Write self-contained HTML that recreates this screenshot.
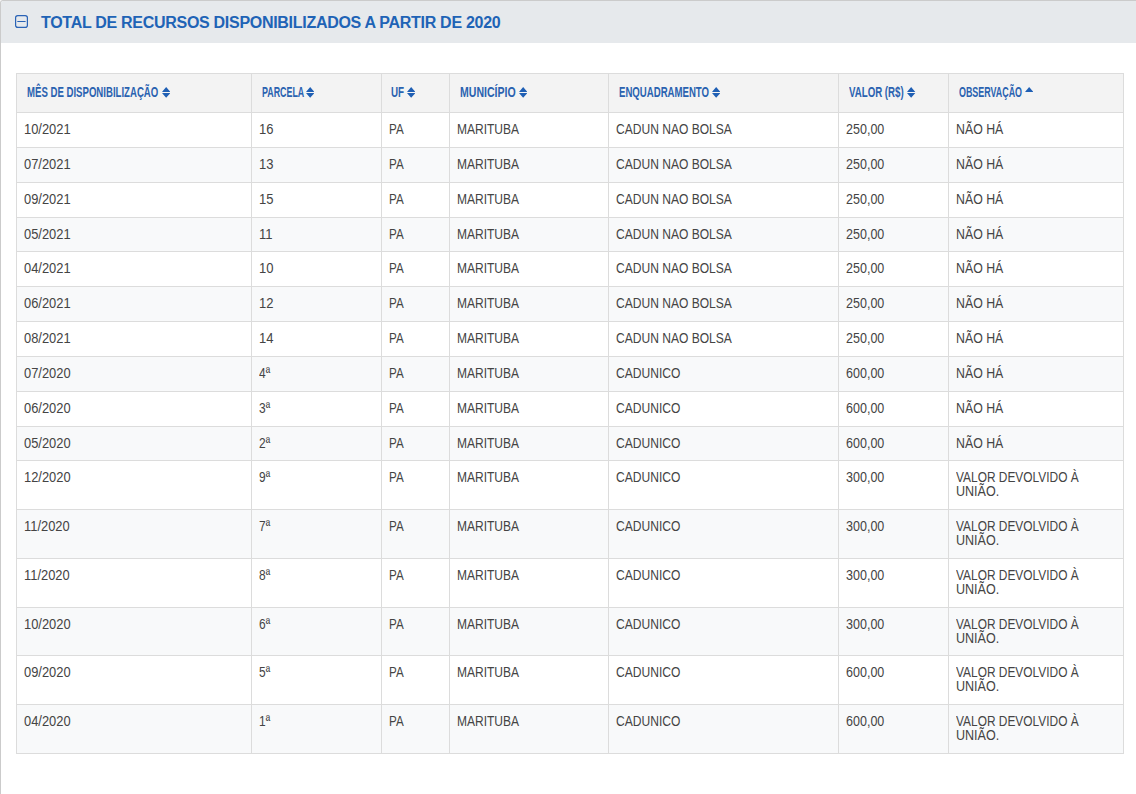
<!DOCTYPE html>
<html><head><meta charset="utf-8"><style>
html,body{margin:0;padding:0}
body{width:1136px;height:794px;overflow:hidden;background:#fff;position:relative;font-family:"Liberation Sans",sans-serif}
.box{position:absolute;left:0;top:0;width:1300px;height:900px;border-top:1px solid #cbcbcb;border-left:1px solid #cbcbcb;border-top-left-radius:3px;box-sizing:border-box}
.hd{position:absolute;left:1px;top:1px;width:1200px;height:42px;background:#e6e9ec;border-top-left-radius:2px}
.ttl{position:absolute;left:41px;top:13px;font-weight:bold;font-size:16px;line-height:20px;letter-spacing:-0.29px;color:#2063b6;white-space:nowrap}
.ic{position:absolute;left:15px;top:15px}
.hl{position:absolute;left:16px;width:1108px;height:1px;background:#dcdcdc}
.vl{position:absolute;top:73px;width:1px;height:681px;background:#dcdcdc}
.bg{position:absolute;left:17px;width:1106px}
.c{position:absolute;font-size:14px;line-height:14px;color:#444;white-space:nowrap;transform-origin:0 0}
.th{position:absolute;top:85px;font-weight:bold;font-size:14px;line-height:14px;color:#2a62b0;white-space:nowrap;transform-origin:0 0}
.si{position:absolute;top:87px}
</style></head><body>
<div class="box"></div>
<div class="hd"></div>
<svg class="ic" width="13" height="13" viewBox="0 0 13 13"><rect x="0.6" y="0.6" width="11.8" height="11.8" rx="2.2" fill="none" stroke="#2a63b6" stroke-width="1.2"/><rect x="2.3" y="6" width="8.3" height="1" fill="#2a63b6"/></svg>
<div class="ttl">TOTAL DE RECURSOS DISPONIBILIZADOS A PARTIR DE 2020</div>

<div class="bg" style="top:74px;height:38px;background:#f3f3f3"></div>
<div class="bg" style="top:148px;height:34px;background:#f8f9fa"></div>
<div class="bg" style="top:218px;height:33px;background:#f8f9fa"></div>
<div class="bg" style="top:287px;height:34px;background:#f8f9fa"></div>
<div class="bg" style="top:357px;height:34px;background:#f8f9fa"></div>
<div class="bg" style="top:427px;height:33px;background:#f8f9fa"></div>
<div class="bg" style="top:510px;height:48px;background:#f8f9fa"></div>
<div class="bg" style="top:608px;height:47px;background:#f8f9fa"></div>
<div class="bg" style="top:705px;height:48px;background:#f8f9fa"></div>
<div class="hl" style="top:73px"></div>
<div class="hl" style="top:112px"></div>
<div class="hl" style="top:147px"></div>
<div class="hl" style="top:182px"></div>
<div class="hl" style="top:217px"></div>
<div class="hl" style="top:251px"></div>
<div class="hl" style="top:286px"></div>
<div class="hl" style="top:321px"></div>
<div class="hl" style="top:356px"></div>
<div class="hl" style="top:391px"></div>
<div class="hl" style="top:426px"></div>
<div class="hl" style="top:460px"></div>
<div class="hl" style="top:509px"></div>
<div class="hl" style="top:558px"></div>
<div class="hl" style="top:607px"></div>
<div class="hl" style="top:655px"></div>
<div class="hl" style="top:704px"></div>
<div class="hl" style="top:753px"></div>
<div class="vl" style="left:16px"></div>
<div class="vl" style="left:251px"></div>
<div class="vl" style="left:381px"></div>
<div class="vl" style="left:449px"></div>
<div class="vl" style="left:608px"></div>
<div class="vl" style="left:838px"></div>
<div class="vl" style="left:948px"></div>
<div class="vl" style="left:1123px"></div>
<div class="th" style="left:27.01px;transform:scaleX(0.6858)">MÊS DE DISPONIBILIZAÇÃO</div>
<svg class="si" style="left:161.5px" width="8.3" height="11" viewBox="0 0 8.3 11"><path d="M4.15 0L8.3 4.9H0Z M4.15 10.8L8.3 6.1H0Z" fill="#1f5fb4"/></svg>
<div class="th" style="left:261.77px;transform:scaleX(0.6338)">PARCELA</div>
<svg class="si" style="left:306.2px" width="8.3" height="11" viewBox="0 0 8.3 11"><path d="M4.15 0L8.3 4.9H0Z M4.15 10.8L8.3 6.1H0Z" fill="#1f5fb4"/></svg>
<div class="th" style="left:391.30px;transform:scaleX(0.7000)">UF</div>
<svg class="si" style="left:406.6px" width="8.3" height="11" viewBox="0 0 8.3 11"><path d="M4.15 0L8.3 4.9H0Z M4.15 10.8L8.3 6.1H0Z" fill="#1f5fb4"/></svg>
<div class="th" style="left:460.25px;transform:scaleX(0.7521)">MUNICÍPIO</div>
<svg class="si" style="left:518.8px" width="8.3" height="11" viewBox="0 0 8.3 11"><path d="M4.15 0L8.3 4.9H0Z M4.15 10.8L8.3 6.1H0Z" fill="#1f5fb4"/></svg>
<div class="th" style="left:618.71px;transform:scaleX(0.6862)">ENQUADRAMENTO</div>
<svg class="si" style="left:711.9px" width="8.3" height="11" viewBox="0 0 8.3 11"><path d="M4.15 0L8.3 4.9H0Z M4.15 10.8L8.3 6.1H0Z" fill="#1f5fb4"/></svg>
<div class="th" style="left:848.91px;transform:scaleX(0.6911)">VALOR (R$)</div>
<svg class="si" style="left:907.3px" width="8.3" height="11" viewBox="0 0 8.3 11"><path d="M4.15 0L8.3 4.9H0Z M4.15 10.8L8.3 6.1H0Z" fill="#1f5fb4"/></svg>
<div class="th" style="left:958.86px;transform:scaleX(0.6364)">OBSERVAÇÃO</div>
<svg class="si" style="left:1025.2px" width="8.3" height="5" viewBox="0 0 8.3 5"><path d="M4.15 0L8.3 4.9H0Z" fill="#1f5fb4"/></svg>
<div class="c" style="left:24px;top:122px;transform:scaleX(0.922)">10/2021</div>
<div class="c" style="left:259px;top:122px;transform:scaleX(0.93)">16</div>
<div class="c" style="left:389px;top:122px;transform:scaleX(0.83)">PA</div>
<div class="c" style="left:457px;top:122px;transform:scaleX(0.858)">MARITUBA</div>
<div class="c" style="left:616px;top:122px;transform:scaleX(0.861)">CADUN NAO BOLSA</div>
<div class="c" style="left:846px;top:122px;transform:scaleX(0.895)">250,00</div>
<div class="c" style="left:956px;top:122px;transform:scaleX(0.881)">NÃO HÁ</div>
<div class="c" style="left:24px;top:157px;transform:scaleX(0.922)">07/2021</div>
<div class="c" style="left:259px;top:157px;transform:scaleX(0.93)">13</div>
<div class="c" style="left:389px;top:157px;transform:scaleX(0.83)">PA</div>
<div class="c" style="left:457px;top:157px;transform:scaleX(0.858)">MARITUBA</div>
<div class="c" style="left:616px;top:157px;transform:scaleX(0.861)">CADUN NAO BOLSA</div>
<div class="c" style="left:846px;top:157px;transform:scaleX(0.895)">250,00</div>
<div class="c" style="left:956px;top:157px;transform:scaleX(0.881)">NÃO HÁ</div>
<div class="c" style="left:24px;top:192px;transform:scaleX(0.922)">09/2021</div>
<div class="c" style="left:259px;top:192px;transform:scaleX(0.93)">15</div>
<div class="c" style="left:389px;top:192px;transform:scaleX(0.83)">PA</div>
<div class="c" style="left:457px;top:192px;transform:scaleX(0.858)">MARITUBA</div>
<div class="c" style="left:616px;top:192px;transform:scaleX(0.861)">CADUN NAO BOLSA</div>
<div class="c" style="left:846px;top:192px;transform:scaleX(0.895)">250,00</div>
<div class="c" style="left:956px;top:192px;transform:scaleX(0.881)">NÃO HÁ</div>
<div class="c" style="left:24px;top:227px;transform:scaleX(0.922)">05/2021</div>
<div class="c" style="left:259px;top:227px;transform:scaleX(0.93)">11</div>
<div class="c" style="left:389px;top:227px;transform:scaleX(0.83)">PA</div>
<div class="c" style="left:457px;top:227px;transform:scaleX(0.858)">MARITUBA</div>
<div class="c" style="left:616px;top:227px;transform:scaleX(0.861)">CADUN NAO BOLSA</div>
<div class="c" style="left:846px;top:227px;transform:scaleX(0.895)">250,00</div>
<div class="c" style="left:956px;top:227px;transform:scaleX(0.881)">NÃO HÁ</div>
<div class="c" style="left:24px;top:261px;transform:scaleX(0.922)">04/2021</div>
<div class="c" style="left:259px;top:261px;transform:scaleX(0.93)">10</div>
<div class="c" style="left:389px;top:261px;transform:scaleX(0.83)">PA</div>
<div class="c" style="left:457px;top:261px;transform:scaleX(0.858)">MARITUBA</div>
<div class="c" style="left:616px;top:261px;transform:scaleX(0.861)">CADUN NAO BOLSA</div>
<div class="c" style="left:846px;top:261px;transform:scaleX(0.895)">250,00</div>
<div class="c" style="left:956px;top:261px;transform:scaleX(0.881)">NÃO HÁ</div>
<div class="c" style="left:24px;top:296px;transform:scaleX(0.922)">06/2021</div>
<div class="c" style="left:259px;top:296px;transform:scaleX(0.93)">12</div>
<div class="c" style="left:389px;top:296px;transform:scaleX(0.83)">PA</div>
<div class="c" style="left:457px;top:296px;transform:scaleX(0.858)">MARITUBA</div>
<div class="c" style="left:616px;top:296px;transform:scaleX(0.861)">CADUN NAO BOLSA</div>
<div class="c" style="left:846px;top:296px;transform:scaleX(0.895)">250,00</div>
<div class="c" style="left:956px;top:296px;transform:scaleX(0.881)">NÃO HÁ</div>
<div class="c" style="left:24px;top:331px;transform:scaleX(0.922)">08/2021</div>
<div class="c" style="left:259px;top:331px;transform:scaleX(0.93)">14</div>
<div class="c" style="left:389px;top:331px;transform:scaleX(0.83)">PA</div>
<div class="c" style="left:457px;top:331px;transform:scaleX(0.858)">MARITUBA</div>
<div class="c" style="left:616px;top:331px;transform:scaleX(0.861)">CADUN NAO BOLSA</div>
<div class="c" style="left:846px;top:331px;transform:scaleX(0.895)">250,00</div>
<div class="c" style="left:956px;top:331px;transform:scaleX(0.881)">NÃO HÁ</div>
<div class="c" style="left:24px;top:366px;transform:scaleX(0.922)">07/2020</div>
<div class="c" style="left:259px;top:366px;transform:scaleX(0.854)">4ª</div>
<div class="c" style="left:389px;top:366px;transform:scaleX(0.83)">PA</div>
<div class="c" style="left:457px;top:366px;transform:scaleX(0.858)">MARITUBA</div>
<div class="c" style="left:616px;top:366px;transform:scaleX(0.862)">CADUNICO</div>
<div class="c" style="left:846px;top:366px;transform:scaleX(0.895)">600,00</div>
<div class="c" style="left:956px;top:366px;transform:scaleX(0.881)">NÃO HÁ</div>
<div class="c" style="left:24px;top:401px;transform:scaleX(0.922)">06/2020</div>
<div class="c" style="left:259px;top:401px;transform:scaleX(0.854)">3ª</div>
<div class="c" style="left:389px;top:401px;transform:scaleX(0.83)">PA</div>
<div class="c" style="left:457px;top:401px;transform:scaleX(0.858)">MARITUBA</div>
<div class="c" style="left:616px;top:401px;transform:scaleX(0.862)">CADUNICO</div>
<div class="c" style="left:846px;top:401px;transform:scaleX(0.895)">600,00</div>
<div class="c" style="left:956px;top:401px;transform:scaleX(0.881)">NÃO HÁ</div>
<div class="c" style="left:24px;top:436px;transform:scaleX(0.922)">05/2020</div>
<div class="c" style="left:259px;top:436px;transform:scaleX(0.854)">2ª</div>
<div class="c" style="left:389px;top:436px;transform:scaleX(0.83)">PA</div>
<div class="c" style="left:457px;top:436px;transform:scaleX(0.858)">MARITUBA</div>
<div class="c" style="left:616px;top:436px;transform:scaleX(0.862)">CADUNICO</div>
<div class="c" style="left:846px;top:436px;transform:scaleX(0.895)">600,00</div>
<div class="c" style="left:956px;top:436px;transform:scaleX(0.881)">NÃO HÁ</div>
<div class="c" style="left:24px;top:470px;transform:scaleX(0.922)">12/2020</div>
<div class="c" style="left:259px;top:470px;transform:scaleX(0.854)">9ª</div>
<div class="c" style="left:389px;top:470px;transform:scaleX(0.83)">PA</div>
<div class="c" style="left:457px;top:470px;transform:scaleX(0.858)">MARITUBA</div>
<div class="c" style="left:616px;top:470px;transform:scaleX(0.862)">CADUNICO</div>
<div class="c" style="left:846px;top:470px;transform:scaleX(0.895)">300,00</div>
<div class="c" style="left:956px;top:470px;transform:scaleX(0.851)">VALOR DEVOLVIDO À</div>
<div class="c" style="left:956px;top:484px;transform:scaleX(0.896)">UNIÃO.</div>
<div class="c" style="left:24px;top:519px;transform:scaleX(0.922)">11/2020</div>
<div class="c" style="left:259px;top:519px;transform:scaleX(0.854)">7ª</div>
<div class="c" style="left:389px;top:519px;transform:scaleX(0.83)">PA</div>
<div class="c" style="left:457px;top:519px;transform:scaleX(0.858)">MARITUBA</div>
<div class="c" style="left:616px;top:519px;transform:scaleX(0.862)">CADUNICO</div>
<div class="c" style="left:846px;top:519px;transform:scaleX(0.895)">300,00</div>
<div class="c" style="left:956px;top:519px;transform:scaleX(0.851)">VALOR DEVOLVIDO À</div>
<div class="c" style="left:956px;top:533px;transform:scaleX(0.896)">UNIÃO.</div>
<div class="c" style="left:24px;top:568px;transform:scaleX(0.922)">11/2020</div>
<div class="c" style="left:259px;top:568px;transform:scaleX(0.854)">8ª</div>
<div class="c" style="left:389px;top:568px;transform:scaleX(0.83)">PA</div>
<div class="c" style="left:457px;top:568px;transform:scaleX(0.858)">MARITUBA</div>
<div class="c" style="left:616px;top:568px;transform:scaleX(0.862)">CADUNICO</div>
<div class="c" style="left:846px;top:568px;transform:scaleX(0.895)">300,00</div>
<div class="c" style="left:956px;top:568px;transform:scaleX(0.851)">VALOR DEVOLVIDO À</div>
<div class="c" style="left:956px;top:582px;transform:scaleX(0.896)">UNIÃO.</div>
<div class="c" style="left:24px;top:617px;transform:scaleX(0.922)">10/2020</div>
<div class="c" style="left:259px;top:617px;transform:scaleX(0.854)">6ª</div>
<div class="c" style="left:389px;top:617px;transform:scaleX(0.83)">PA</div>
<div class="c" style="left:457px;top:617px;transform:scaleX(0.858)">MARITUBA</div>
<div class="c" style="left:616px;top:617px;transform:scaleX(0.862)">CADUNICO</div>
<div class="c" style="left:846px;top:617px;transform:scaleX(0.895)">300,00</div>
<div class="c" style="left:956px;top:617px;transform:scaleX(0.851)">VALOR DEVOLVIDO À</div>
<div class="c" style="left:956px;top:631px;transform:scaleX(0.896)">UNIÃO.</div>
<div class="c" style="left:24px;top:665px;transform:scaleX(0.922)">09/2020</div>
<div class="c" style="left:259px;top:665px;transform:scaleX(0.854)">5ª</div>
<div class="c" style="left:389px;top:665px;transform:scaleX(0.83)">PA</div>
<div class="c" style="left:457px;top:665px;transform:scaleX(0.858)">MARITUBA</div>
<div class="c" style="left:616px;top:665px;transform:scaleX(0.862)">CADUNICO</div>
<div class="c" style="left:846px;top:665px;transform:scaleX(0.895)">600,00</div>
<div class="c" style="left:956px;top:665px;transform:scaleX(0.851)">VALOR DEVOLVIDO À</div>
<div class="c" style="left:956px;top:679px;transform:scaleX(0.896)">UNIÃO.</div>
<div class="c" style="left:24px;top:714px;transform:scaleX(0.922)">04/2020</div>
<div class="c" style="left:259px;top:714px;transform:scaleX(0.854)">1ª</div>
<div class="c" style="left:389px;top:714px;transform:scaleX(0.83)">PA</div>
<div class="c" style="left:457px;top:714px;transform:scaleX(0.858)">MARITUBA</div>
<div class="c" style="left:616px;top:714px;transform:scaleX(0.862)">CADUNICO</div>
<div class="c" style="left:846px;top:714px;transform:scaleX(0.895)">600,00</div>
<div class="c" style="left:956px;top:714px;transform:scaleX(0.851)">VALOR DEVOLVIDO À</div>
<div class="c" style="left:956px;top:728px;transform:scaleX(0.896)">UNIÃO.</div>
</body></html>
